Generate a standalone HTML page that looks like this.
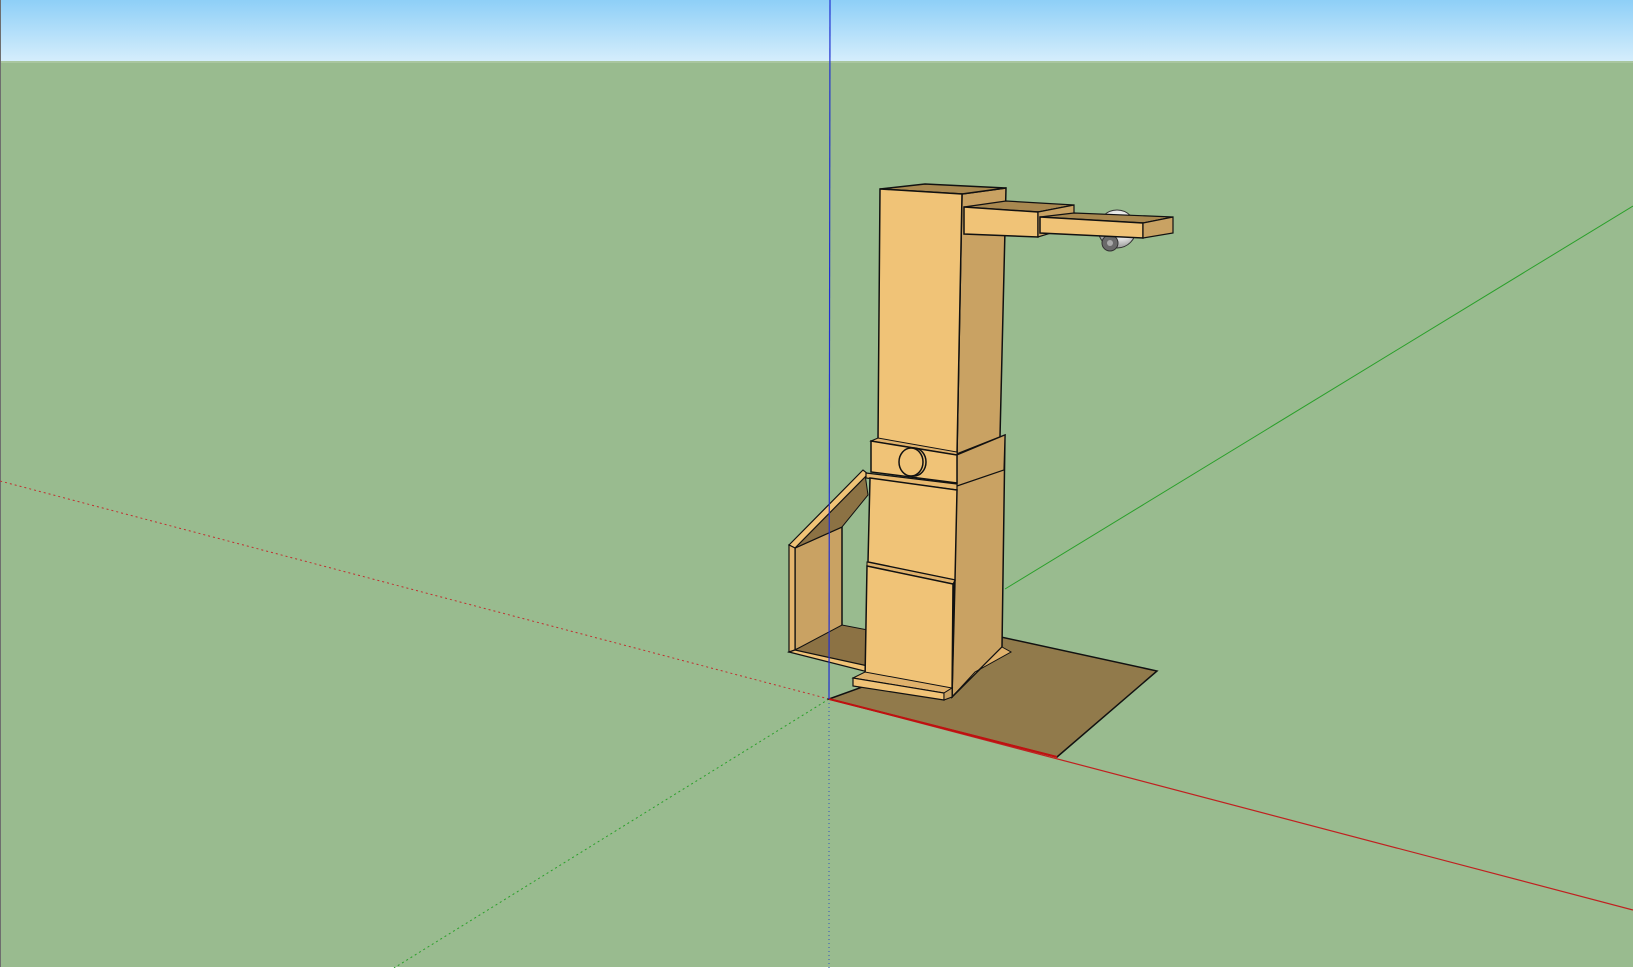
<!DOCTYPE html>
<html><head><meta charset="utf-8"><style>
html,body{margin:0;padding:0;width:1633px;height:968px;overflow:hidden;background:#99bb8f}
svg{display:block}
</style></head><body>
<svg width="1633" height="968" viewBox="0 0 1633 968" xmlns="http://www.w3.org/2000/svg">
<defs>
<linearGradient id="sky" x1="0" y1="0" x2="0" y2="1">
<stop offset="0" stop-color="#8ecff7"/><stop offset="1" stop-color="#d6eefc"/>
</linearGradient>
<radialGradient id="ball" cx="0.6" cy="0.35" r="0.7">
<stop offset="0" stop-color="#ffffff"/><stop offset="0.6" stop-color="#e0e0e0"/><stop offset="1" stop-color="#8a8a8a"/>
</radialGradient>
</defs>
<rect x="0" y="0" width="1633" height="62" fill="url(#sky)"/>
<rect x="0" y="62" width="1633" height="906" fill="#99bb8f"/>
<rect x="0" y="61" width="1633" height="2" fill="#a9c6a0"/>
<rect x="0" y="0" width="1" height="968" fill="#6e6e6e"/>
<rect x="0" y="967" width="1633" height="1" fill="#ffffff"/>

<!-- axes -->
<line x1="829" y1="699" x2="0" y2="481" stroke="#c03030" stroke-width="1" stroke-dasharray="2,3"/>
<line x1="829" y1="699" x2="394" y2="968" stroke="#2aa02a" stroke-width="1" stroke-dasharray="2,3"/>
<line x1="829" y1="699" x2="829" y2="968" stroke="#3050c0" stroke-width="1" stroke-dasharray="1,3"/>
<line x1="1005" y1="589" x2="1633" y2="206" stroke="#2aa02a" stroke-width="1"/>
<line x1="829" y1="699" x2="1633" y2="910" stroke="#c02020" stroke-width="1.2"/>

<!-- shadow -->
<polygon points="829,699 1001,637 1157,671 1057,757" fill="#917a4b" stroke="#111" stroke-width="1.5"/>
<line x1="829" y1="699" x2="1057" y2="757" stroke="#c01010" stroke-width="2"/>

<!-- left box -->
<polygon points="795,548 842,527 842,630 795,650" fill="#c9a263" stroke="#111" stroke-width="1.5"/>
<polygon points="795,548 865,474 868,495 842,527" fill="#8c7244" stroke="#111" stroke-width="1"/>
<polygon points="795,650 842,625 868,630 868,668" fill="#8c7244" stroke="#111" stroke-width="1"/>
<polygon points="789,545 863,470 868,474 795,548" fill="#f0c377" stroke="#111" stroke-width="1.2"/>
<polygon points="789,545 795,548 795,650 789,652" fill="#e4b56e" stroke="#111" stroke-width="1.2"/>
<polygon points="789,652 795,650 868,666 868,672" fill="#f0c377" stroke="#111" stroke-width="1.2"/>

<!-- tower big right face -->
<polygon points="957,454 1005,435 1002,647 952,697" fill="#c9a263" stroke="#111" stroke-width="1.5"/>
<polygon points="1002,647 1011,652 975,672 952,697" fill="#e0b26c" stroke="#111" stroke-width="1"/>

<!-- upper column -->
<polygon points="962,194 1006,188 1000,437 957,454" fill="#c9a263" stroke="#111" stroke-width="1.5"/>
<polygon points="880,189 925,184 1006,188 962,194" fill="#a88850" stroke="#111" stroke-width="1.5"/>
<polygon points="880,189 962,194 957,454 878,440" fill="#f0c377" stroke="#111" stroke-width="1.5"/>

<!-- collar -->
<polygon points="957,455 1005,435 1004,470 957,486" fill="#c9a263" stroke="#111" stroke-width="1.2"/>
<polygon points="871,441 878,438 957,452 957,455" fill="#e0b26c" stroke="#111" stroke-width="1"/>
<polygon points="871,441 957,455 957,483 871,472" fill="#f0c377" stroke="#111" stroke-width="1.5"/>
<ellipse cx="914" cy="462" rx="12" ry="14" fill="#eabd72" stroke="#111" stroke-width="1.5"/>
<ellipse cx="911" cy="462" rx="12" ry="14" fill="#f0c377" stroke="#111" stroke-width="1.5"/>
<polygon points="866,473 957,484 957,490 866,478" fill="#e8b96f" stroke="#111" stroke-width="1.2"/>

<!-- lower body -->
<polygon points="870,478 957,490 955,580 868,562" fill="#f0c377" stroke="#111" stroke-width="1.5"/>
<polygon points="867,562 955,580 953,584 867,566" fill="#e0b26c" stroke="#111" stroke-width="1"/>
<polygon points="867,566 953,584 952,697 865,680" fill="#f0c377" stroke="#111" stroke-width="1.5"/>
<line x1="955" y1="580" x2="952" y2="697" stroke="#111" stroke-width="1.5"/>

<!-- base plate -->
<polygon points="853,678 865,672 952,688 944,693" fill="#e0b26c" stroke="#111" stroke-width="1"/>
<polygon points="853,678 944,693 944,700 853,686" fill="#f0c377" stroke="#111" stroke-width="1.2"/>
<polygon points="944,693 952,688 952,697 944,700" fill="#c9a263" stroke="#111" stroke-width="1"/>

<!-- arm 1 -->
<polygon points="964,207 1006,201 1074,205 1038,212" fill="#a88850" stroke="#111" stroke-width="1.2"/>
<polygon points="964,207 1038,212 1038,237 964,234" fill="#f0c377" stroke="#111" stroke-width="1.5"/>
<polygon points="1038,212 1074,205 1074,226 1038,237" fill="#c9a263" stroke="#111" stroke-width="1.2"/>
<!-- camera -->
<circle cx="1117" cy="229" r="19" fill="url(#ball)" stroke="#333" stroke-width="1"/>
<circle cx="1110" cy="243" r="8" fill="#6a6a6a" stroke="#333" stroke-width="1"/>
<circle cx="1110" cy="243" r="3" fill="#aaa"/>
<!-- arm 2 -->
<polygon points="1040,217 1074,213 1173,217 1143,223" fill="#a88850" stroke="#111" stroke-width="1.2"/>
<polygon points="1040,217 1143,223 1143,238 1040,233" fill="#f0c377" stroke="#111" stroke-width="1.5"/>
<polygon points="1143,223 1173,217 1173,233 1143,238" fill="#c9a263" stroke="#111" stroke-width="1.2"/>

<!-- blue axis on top -->
<line x1="830" y1="0" x2="829" y2="699" stroke="#2030d0" stroke-width="1.2"/>
</svg>
</body></html>
